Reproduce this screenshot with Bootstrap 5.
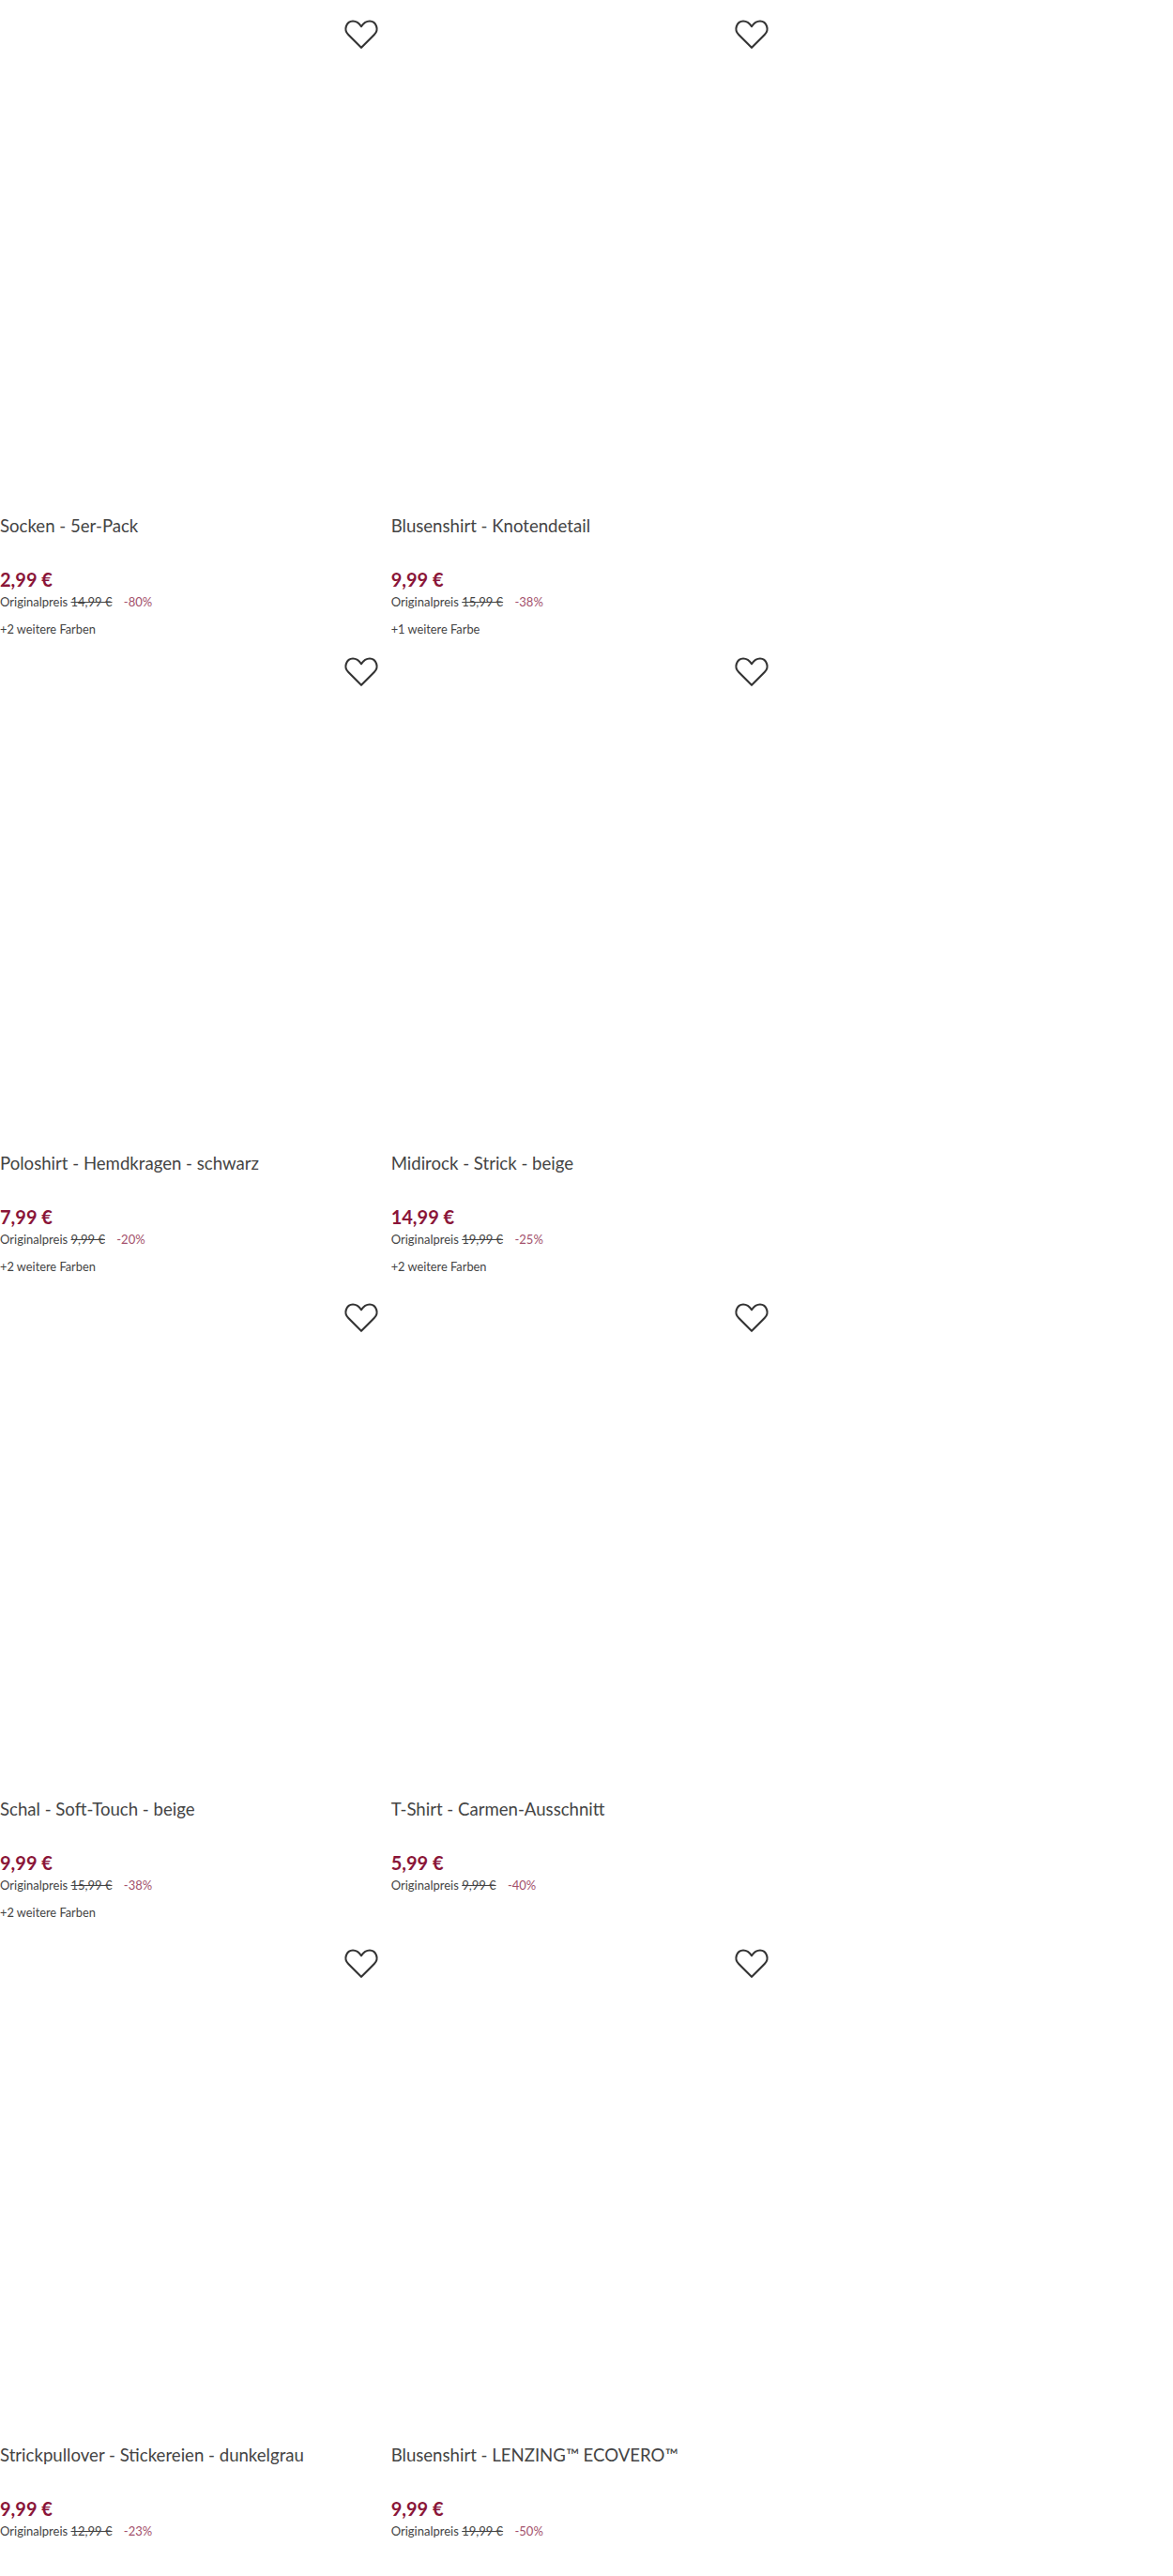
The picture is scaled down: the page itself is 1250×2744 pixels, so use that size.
<!DOCTYPE html>
<html lang="de">
<head>
    <meta charset="UTF-8">
    <title>Produkte</title>
    <link href="https://cdn.jsdelivr.net/npm/bootstrap@5.3.0/dist/css/bootstrap.min.css" rel="stylesheet">
    <style>
        body { font-family: Lato, "Liberation Sans", sans-serif; color: #444; overflow: hidden; }
        .produkt { height: 688px; }
        .produkt-erste { height: 679px; }
        .bild { height: 547px; }
        .merken { top: 16px; right: 13px; width: 38px; height: 38px; background: none; border: 0; }
        .titel { font-size: 18.6px; line-height: 26px; height: 58px; margin: 0; font-weight: 400; }
        .preis { font-size: 20px; line-height: 24px; font-weight: 700; color: #8a1538; }
        .alt { font-size: 13px; line-height: 24px; }
        .rabatt { color: #a3506b; margin-left: 9px; }
        .farben { font-size: 12.8px; line-height: 18px; margin-top: 8px; }
    </style>
</head>
<body>

    <div class="row g-0" id="liste"></div>

    <script src="https://cdn.jsdelivr.net/npm/bootstrap@5.3.0/dist/js/bootstrap.bundle.min.js"></script>
    <script>
        const produkte = [
            ["Socken - 5er-Pack", "2,99", "14,99", "-80%", "+2 weitere Farben"],
            ["Blusenshirt - Knotendetail", "9,99", "15,99", "-38%", "+1 weitere Farbe"],
            ["Poloshirt - Hemdkragen - schwarz", "7,99", "9,99", "-20%", "+2 weitere Farben"],
            ["Midirock - Strick - beige", "14,99", "19,99", "-25%", "+2 weitere Farben"],
            ["Schal - Soft-Touch - beige", "9,99", "15,99", "-38%", "+2 weitere Farben"],
            ["T-Shirt - Carmen-Ausschnitt", "5,99", "9,99", "-40%", ""],
            ["Strickpullover - Stickereien - dunkelgrau", "9,99", "12,99", "-23%", ""],
            ["Blusenshirt - LENZING™ ECOVERO™", "9,99", "19,99", "-50%", ""]
        ];

        const herz = `<svg width="38" height="38" viewBox="0 0 36 36" fill="none" stroke="#333" stroke-width="2" stroke-linejoin="round">
            <path d="M18 33 L5 20 C2.5 17.5 1.7 14.5 2.7 11.5 C3.8 8.3 6.5 6.2 9.5 6.2 C13 6.2 15.8 8.2 18 11.6 C20.2 8.2 23 6.2 26.5 6.2 C29.5 6.2 32.2 8.3 33.3 11.5 C34.3 14.5 33.5 17.5 31 20 Z"/>
        </svg>`;

        const liste = document.getElementById("liste");
        produkte.forEach((p, i) => {
            // jede Reihe hat zwei Produkte, die dritte Spalte bleibt leer
            const art = i < 2 ? "produkt-erste" : "";
            liste.innerHTML += `
                <div class="col-4 position-relative produkt ${art}">
                    <button class="merken position-absolute p-0" type="button" aria-label="Merken">${herz}</button>
                    <div class="bild"></div>
                    <h3 class="titel">${p[0]}</h3>
                    <div class="preis">${p[1]} €</div>
                    <div class="alt">Originalpreis <s>${p[2]} €</s> <span class="rabatt">${p[3]}</span></div>
                    <div class="farben">${p[4]}</div>
                </div>`;
            if (i % 2 == 1) liste.innerHTML += `<div class="col-4"></div>`;
        });
    </script>

</body>
</html>
